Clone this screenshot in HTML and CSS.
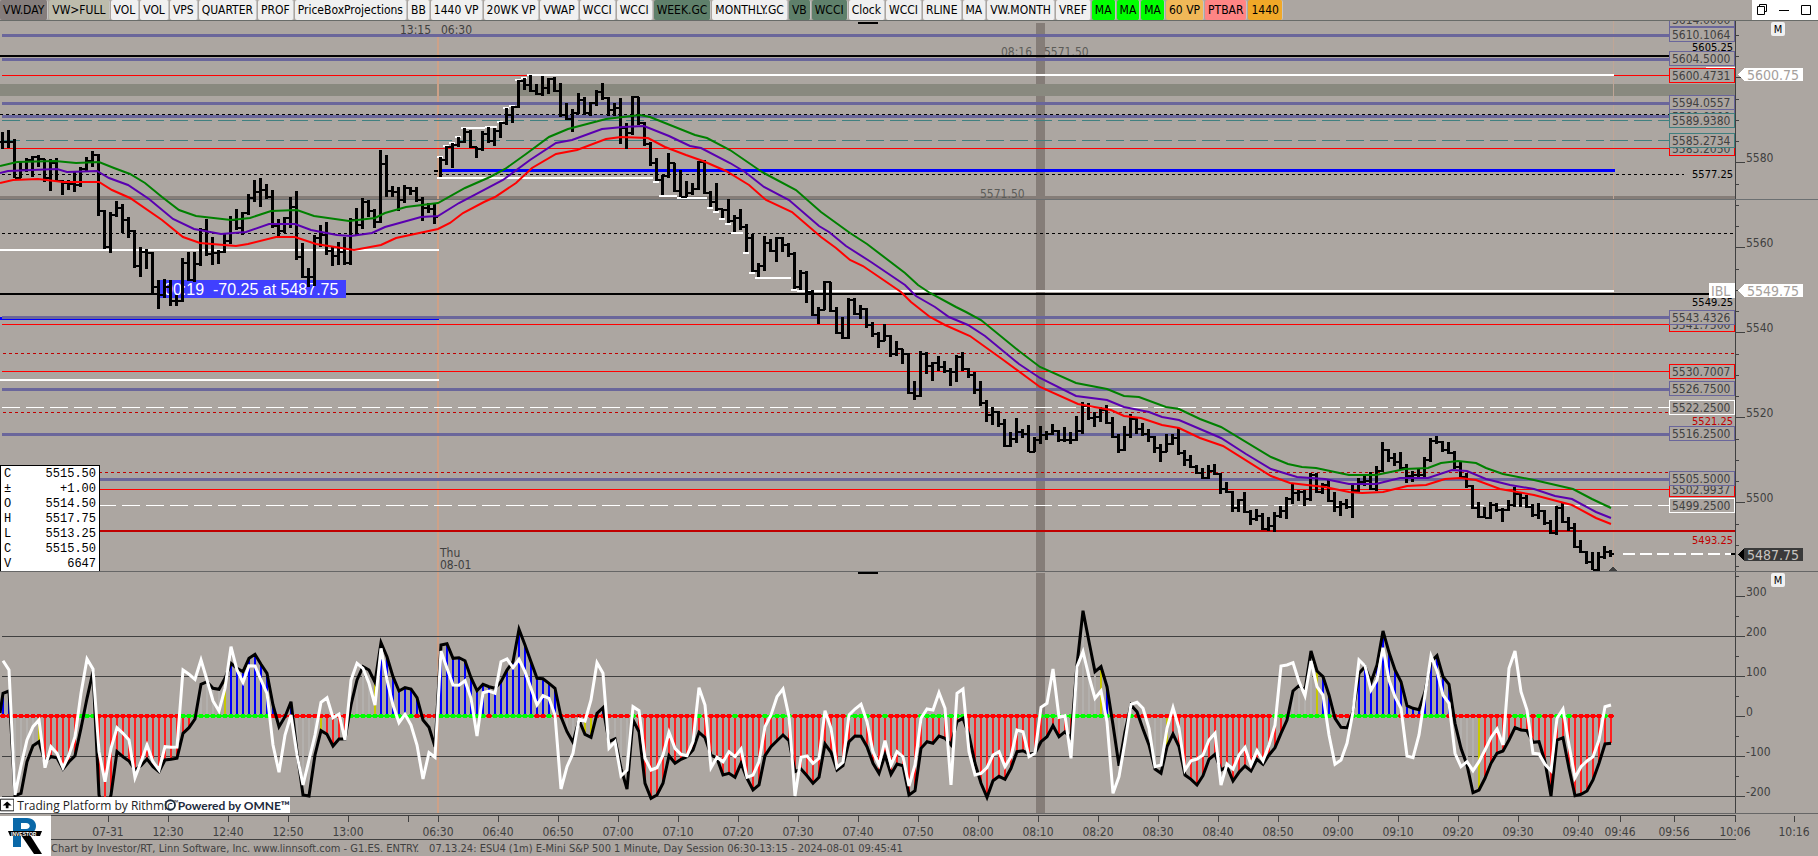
FILE: index.html
```html
<!DOCTYPE html>
<html lang="en">
<head>
    <meta charset="UTF-8">
    <meta name="viewport" content="width=device-width, initial-scale=1.0">
    <title>G1.ES. ENTRY. - ESU4 (1m)</title>
    <link rel="stylesheet" href="styles.css">
</head>
<body>
    <header class="toolbar">
        <nav class="buttons">
            <button class="dark">VW.DAY</button>
            <button class="olive">VW&gt;FULL</button>
            <button>VOL</button>
            <button>VOL</button>
            <button>VPS</button>
            <button>QUARTER</button>
            <button>PROF</button>
            <button>PriceBoxProjections</button>
            <button>BB</button>
            <button>1440 VP</button>
            <button>20WK VP</button>
            <button>VWAP</button>
            <button>WCCI</button>
            <button>WCCI</button>
            <button class="pine">WEEK.GC</button>
            <button>MONTHLY.GC</button>
            <button class="pine">VB</button>
            <button class="pine">WCCI</button>
            <button>Clock</button>
            <button>WCCI</button>
            <button>RLINE</button>
            <button>MA</button>
            <button>VW.MONTH</button>
            <button>VREF</button>
            <button class="lime">MA</button>
            <button class="lime">MA</button>
            <button class="lime">MA</button>
            <button class="sand">60 VP</button>
            <button class="pink">PTBAR</button>
            <button class="orange">1440</button>
        </nav>
        <div class="window-buttons">
            <button aria-label="Restore">
                <svg width="12" height="12" viewBox="0 0 12 12"><path d="M3.5 2.5v-2h7v7h-2M1.5 2.5h7v8h-7z"/></svg>
            </button>
            <button aria-label="Minimize">
                <svg width="12" height="12" viewBox="0 0 12 12"><path d="M1 6.5h10"/></svg>
            </button>
            <button aria-label="Maximize">
                <svg width="12" height="12" viewBox="0 0 12 12"><path d="M1.5 1.5h9v9h-9z"/></svg>
            </button>
        </div>
    </header>

    <main class="workspace">
        <section class="pane">
            <svg class="plot" id="pricePlot"></svg>
            <button class="mode">M</button>
            <table class="quote">
                <tr><th>C</th><td>5515.50</td></tr>
                <tr><th>±</th><td>+1.00</td></tr>
                <tr><th>O</th><td>5514.50</td></tr>
                <tr><th>H</th><td>5517.75</td></tr>
                <tr><th>L</th><td>5513.25</td></tr>
                <tr><th>C</th><td>5515.50</td></tr>
                <tr><th>V</th><td>6647</td></tr>
            </table>
        </section>

        <section class="pane">
            <svg class="plot" id="studyPlot"></svg>
            <button class="mode">M</button>
            <div class="badge">
                <svg class="badge-arrow" width="16" height="14" viewBox="0 0 16 14">
                    <path d="M.5.5h15v13h-15z" fill="#fff" stroke="#000"/>
                    <path d="M8 3l5 4.500h-3.500v3h-3v-3h-3.500z" fill="#000"/>
                </svg>
                <span class="rithmic">Trading Platform by Rithmic<sup>™</sup></span>
                <svg class="badge-ring" width="14" height="14" viewBox="0 0 14 14">
                    <circle cx="7" cy="7" r="5.300" fill="none" stroke="#1d2b3d" stroke-width="2"/>
                </svg>
                <span class="omne">Powered by OMNE™</span>
            </div>
        </section>
    </main>

    <footer class="bottom">
        <svg class="logo" width="51" height="40" viewBox="0 0 51 40">
            <path d="M13 2h14c6 0 9 4 9 8 0 5-4 9-10 9h-5v12h-8zM21 7v6h5c5 0 5-6 0-6z" fill="#0a68a8" fill-rule="evenodd"/>
            <path d="M21 19h9l12 19h-8z" fill="#000"/>
            <path d="M8 15h34l-2 5H10z" fill="#000"/>
            <text x="11" y="20">INVESTOR</text>
        </svg>
        <svg class="plot" id="timeAxis"></svg>
        <p class="credit"><span>Chart by Investor/RT, Linn Software, Inc. www.linnsoft.com - G1.ES. ENTRY.</span><span>07.13.24: ESU4 (1m) E-Mini S&amp;P 500 1 Minute, Day Session 06:30-13:15 - 2024-08-01 09:45:41</span></p>
    </footer>

    <script src="data.js"></script>
    <script src="chart.js"></script>
</body>
</html>
```
FILE: styles.css
```css
* {
    box-sizing: border-box;
}
html, body {
    height: 100%;
}
body {
    margin: 0;
    display: flex;
    flex-direction: column;
    overflow: hidden;
    background: #aca6a1;
    color: #404040;
    font: 12px "DejaVu Sans Condensed", "Noto Sans", sans-serif;
}
button {
    margin: 0;
    padding: 0;
    border: 0;
    font: inherit;
    color: #000;
}

/* toolbar */
.toolbar {
    display: flex;
    justify-content: space-between;
    height: 21px;
    border-bottom: 1px solid #686b68;
}
.buttons {
    display: flex;
    gap: 1px;
}
.buttons button {
    padding: 0 3px;
    background: #f0f0f0;
    border-right: 1px solid #c4c4c4;
    border-radius: 2px;
    white-space: nowrap;
}
.buttons .dark { background: #857d7c; }
.buttons .olive { background: #bdbcac; }
.buttons .pine { background: #5f806b; }
.buttons .lime { background: #00ff00; }
.buttons .sand { background: #f0b858; }
.buttons .pink { background: #ff8585; }
.buttons .orange { background: #f0a828; }
.window-buttons {
    display: flex;
    gap: 10px;
    padding: 0 6px 0 4px;
    background: #fff;
}
.window-buttons button {
    display: flex;
    align-items: center;
    background: none;
}
.window-buttons path {
    fill: none;
    stroke: #000;
}

/* chart panes */
.workspace {
    flex: 1;
    min-height: 0;
    display: grid;
    grid-template-rows: 551fr 242fr;
}
.pane {
    position: relative;
    min-height: 0;
    border-bottom: 1px solid #666;
}
.plot {
    display: block;
    width: 100%;
    height: 100%;
}
.mode {
    position: absolute;
    top: 1px;
    right: 33px;
    width: 14px;
    height: 14px;
    line-height: 13px;
    font-size: 11px;
    background: #f0f0f0;
    border-radius: 2px;
}
.quote {
    position: absolute;
    left: 0;
    bottom: 0;
    width: 100px;
    padding: 0 3px;
    border: 1px solid #000;
    border-bottom: 0;
    border-spacing: 0;
    background: #fff;
    color: #000;
    font: 12px "Liberation Mono", monospace;
}
.quote th, .quote td {
    height: 15px;
    padding: 0;
    font-weight: normal;
    text-align: left;
}
.quote td {
    text-align: right;
}
.badge {
    position: absolute;
    left: 0;
    bottom: 0;
    display: flex;
    align-items: center;
    width: 290px;
    height: 16px;
    background: #fff;
    color: #222;
    white-space: nowrap;
}
.rithmic {
    width: 147px;
    padding-left: 3px;
    font: 12px "Open Sans", sans-serif;
}
.rithmic sup {
    font-size: 7px;
    line-height: 0;
}
.badge-ring {
    margin: 0 1px 0 3px;
}
.omne {
    color: #1d2b3d;
    font: 12px Lato, sans-serif;
    font-weight: bold;
}

/* svg parts */
.plot text {
    fill: #404040;
}
.plot line, .plot path, .plot rect {
    shape-rendering: crispEdges;
}
.plot path, .plot polyline {
    fill: none;
}
.plot .ghost { fill: #5c5c58; }
.plot .small { font-size: 11px; fill: #000; }
.plot .small.loss { fill: #c00000; }
.plot .tag { font-size: 14px; fill: #a5a09c; }
.plot .tag.last { fill: #c8c4c0; }
.plot .banner { font: 16px "Liberation Sans", sans-serif; fill: #fff; white-space: pre; }

/* time axis and credit line */
.bottom {
    display: grid;
    grid-template: 25px 17px / 51px 1fr;
}
.logo {
    grid-row: 1 / 3;
    margin-top: 2px;
    background: #fff;
}
.logo text {
    font: bold 5px "Liberation Sans", sans-serif;
    fill: #fff;
}
.credit {
    display: flex;
    gap: 10px;
    margin: 0 82px 0 0;
    border-top: 1px solid #404040;
    line-height: 18px;
    font-size: 11px;
    white-space: nowrap;
}
```
FILE: data.js
```js
// Samples are stored in thirds of a pixel, counted down from `base`.
// Price bars: high, low, close. A bar opens at the previous close.
const priceBars = [
    { base: 0, bars: [
        [396,448,425],[390,445,425],[417,535,535],[485,535,510],[475,515,480],[468,530,472],[465,500,478],[478,545,535],
        [478,572,490],[475,545,543],[540,584,550],[540,570,552],[515,577,555],[500,560,508],[472,515,482],[453,500,465],
        [462,648,632],[630,748,740],[635,758,645],[603,650,625],[612,698,660],[652,715,692],[690,803,798],[742,830,755],
        [747,807,760],[755,885,860],[840,926,885],[837,893,862],[840,917,903],[885,917,903],[773,905,790],[755,843,840],
        [757,845,793],[685,797,690],[657,768,762],[712,795,760],[750,792,755],[700,760,722],[648,732,660],[627,690,685],
        [635,705,640],[583,645,593],[540,605,575],[534,620,570],[553,597,592],[570,685,678],[658,715,692],[650,700,655],
        [590,683,622],[573,780,772],[728,835,832],[803,860,832],[705,858,715],[675,740,705],[665,765,752],[740,797,768],
        [727,795,757],[712,795,790],[655,795,660],[624,705,675],[594,688,605],[600,650,632],[628,683,665],[450,670,492],
        [465,592,572],[558,590,575],[562,632,600],[555,610,565],[560,585,573],[560,607,600],[592,663,625],[610,640,628],
        [610,673,652],
        // 08-01 session
        [470,532,480],[437,495,440],[430,503,435],[412,440,425],[384,430,395],[390,445,442],[440,475,448],[393,453,403],
        [380,430,423],[385,438,392],[365,415,370],[325,375,345],[318,368,322],[240,325,243],[233,270,255],[225,275,272],
        [253,285,283],[228,288,265],[233,283,238],[232,277,272],[250,350,345],[310,360,358],[328,397,338],[280,342,300],
        [290,345,340],[305,347,310],[270,318,275],[250,300,295],[292,347,330],[310,347,325],[295,432,385],[370,448,398],
        [287,405,292],[290,375,368],[365,437,432],[425,497,490],[475,543,540],[525,585,528],[459,535,490],[490,575,572],
        [510,592,590],[543,592,580],[550,585,568],[483,570,485],[480,583,580],[572,622,605],[550,632,628],[628,655,630],
        [597,670,662],[645,695,655],[627,690,680],[673,755,715],[702,815,812],[790,830,798],[708,812,730],[717,755,752],
        [710,787,713],[710,755,735],[728,772,763],[757,868,862],[810,870,820],[812,908,875],[870,948,945],[922,973,930],
        [843,930,845],[845,937,932]
    ] },
    { base: 900, bars: [
        [22,103,100],[52,118,115],[-5,118,0],[-5,45,42],[15,58,28],[25,85,75],[65,110,103],[97,143,122],
        [73,122,108],[105,172,163],[123,168,148],[147,192,162],[160,283,280],[243,300,288],[153,290,163],[157,223,197],
        [187,242,190],[168,213,200],[183,220,212],[205,257,217],[165,245,172],[157,213,208],[203,235,225],[215,283,270],
        [243,317,308],[300,365,345],[322,375,337],[332,380,373],[358,440,437],[397,440,417],[353,428,395],[388,415,403],
        [375,457,455],[412,457,420],[378,433,405],[393,420,402],[373,405,393],[390,425,420],[382,425,420],[397,432,420],
        [347,422,392],[307,402,318],[310,360,355],[337,380,350],[322,367,330],[315,373,370],[352,415,412],[403,458,450],
        [378,452,405],[342,413,357],[352,402,388],[370,408,402],[387,425,412],[408,460,445],[432,485,455],[402,457,432],
        [403,435,415],[385,465,460],[450,498,480],[465,505,500],[495,523,520],[505,537,533],[495,537,513],[492,525,522],
        [518,583,568],[547,580,575],[572,635,625],[597,637,600],[577,640,637],[630,675,658],[627,662,648],[640,690,688],
        [652,693,677],[637,695,648],[617,655,632],[590,658,598],[548,612,580],[570,602,575],[570,617,597],[520,602,525],
        [520,580,577],[548,583,555],[540,607,602],[575,635,622],[602,647,613],[597,627,622],[550,653,572],[533,577,545],
        [522,557,543],[517,570,567],[497,572,512],[427,515,450],[447,485,475],[460,497,485],[457,510,503],[492,550,527],
        [513,547,525],[507,535,525],[472,530,480],[415,485,422],[408,433,425],[422,455,450],[427,462,458],[452,507,500],
        [487,535,530],[520,563,557],[555,627,623],[605,655,650],[622,655,653],[607,658,615],[610,635,630],[625,665,630],
        [600,632,615],[560,622,582],[580,620,593],[585,625,620],[613,652,645],[608,657,633],[630,675,670],[660,703,700],
        [618,705,625],[610,670,665],[650,692,683],[668,745,742],[720,760,755],[752,792,787],[757,810,810],[757,812,772],
        [738,777,755],[750,770,763]
    ] }
];
const sessionStart = 73;
const sessionOpen = 512;

// moving averages: x,y points in pixels
const averages = [
    ['#008000', '0,166 17,162 55,161 76,163 99,162 114,168 130,174 145,183 162,197 179,210 196,216 231,220 250,218 271,211 297,210 314,216 349,221 375,218 385,213 406,207 438,203 465,188 490,177 505,169 526,154 549,137 568,129 606,119 640,115 650,117 665,123 695,135 707,138 730,150 762,172 796,190 821,212 850,233 867,244 905,273 918,285 930,293 956,307 966,312 981,320 1019,351 1040,367 1076,383 1107,389 1124,396 1139,397 1166,407 1179,409 1200,419 1221,427 1271,457 1288,464 1302,467 1316,468 1349,475 1376,475 1405,469 1428,468 1441,463 1458,461 1476,463 1486,468 1503,474 1534,480 1573,489 1592,499 1611,508'],
    ['#5a00b0', '0,173 8,171 57,169 67,172 97,171 109,178 128,185 149,199 173,219 194,229 221,234 246,232 269,224 295,224 311,230 337,235 351,236 372,233 385,227 421,217 438,216 459,203 503,180 530,160 556,143 572,140 602,129 623,127 644,126 669,136 690,146 701,148 730,163 745,172 764,187 789,200 819,226 829,232 846,246 871,262 905,285 916,296 935,307 949,317 968,325 985,336 1019,364 1040,378 1076,396 1107,400 1124,407 1149,412 1162,417 1179,420 1221,438 1246,454 1271,469 1297,477 1325,479 1349,484 1376,484 1400,478 1428,478 1452,470 1467,471 1486,479 1510,485 1534,489 1555,496 1572,499 1596,512 1611,518'],
    ['#ff0000', '0,183 13,180 38,179 63,182 99,182 112,190 130,198 162,220 183,237 200,243 236,246 248,244 276,237 295,237 316,244 354,250 381,245 396,238 438,229 450,223 463,213 484,202 495,197 516,183 532,168 556,154 577,150 606,139 621,137 648,138 665,147 686,155 703,161 726,171 749,185 766,200 792,212 821,237 836,248 850,260 863,266 901,292 911,302 930,317 945,325 970,336 1002,359 1040,387 1078,404 1111,410 1124,416 1141,418 1162,425 1179,428 1200,438 1223,446 1271,476 1290,483 1307,485 1325,487 1349,492 1362,493 1383,492 1407,486 1426,485 1445,479 1460,478 1476,480 1500,489 1534,495 1572,505 1596,518 1611,524']
];

// horizontal price levels: y, thickness, colour, dash, x start, distance of the end from the axis
const levels = [
    [34, 3, '#6a669b', '', 2, 66], [58, 3, '#6a669b', '', 2, 66], [102, 3, '#6a669b', '', 2, 66],
    [115, 3, '#6a669b', '', 2, 66], [388, 3, '#6a669b', '', 2, 66], [433, 3, '#6a669b', '', 2, 66],
    [478, 3, '#6a669b', '', 2, 66], [55, 2, '#000', '', 0, 66], [293, 2, '#000', '', 0, 26],
    [75, 1, '#f00', '', 2, 66], [148, 1, '#f00', '', 2, 66], [324, 1, '#f00', '', 2, 66],
    [371, 1, '#f00', '', 2, 66], [489, 1, '#f00', '', 2, 66],
    [114, 1, '#000', '3 3', 0, 66], [174, 1, '#000', '3 3', 2, 52], [233, 1, '#000', '3 3', 2, 0],
    [353, 1, '#c00000', '3 3', 3, 0], [412, 1, '#c00000', '3 3', 3, 66], [472, 1, '#c00000', '3 3', 3, 66],
    [120, 1, '#408080', '18 6', 2, 66], [140, 1, '#408080', '18 6', 2, 66],
    [407, 1, '#fff', '18 6', 2, 66], [505, 1, '#fff', '18 6', 2, 66],
    [530, 2, '#c00000', '', 0, 0]
];

// boxed labels at the right edge, drawn in this order
const boxes = [
    [19, '5614.0000', '#6a669b'], [34, '5610.1064', '#6a669b'], [58, '5604.5000', '#6a669b'],
    [75, '5600.4731', '#f00'], [102, '5594.0557', '#6a669b'], [116, '5591.0000', '#6a669b'],
    [120, '5589.9380', '#408080'], [148, '5583.2050', '#f00'], [140, '5585.2734', '#408080'],
    [324, '5541.7500', '#f00'], [317, '5543.4326', '#6a669b'], [371, '5530.7007', '#f00'],
    [388, '5526.7500', '#6a669b'], [407, '5522.2500', '#fff'], [433, '5516.2500', '#6a669b'],
    [489, '5502.9937', '#f00'], [478, '5505.5000', '#6a669b'], [505, '5499.2500', '#fff']
];

const cci = [
    385,378,692,685,590,542,530,590,575,578,612,590,572,490,400,320,690,740,690,560,575,588,615,602,582,605,620,585,583,580,
    505,488,462,358,350,370,373,340,295,310,320,280,268,298,325,420,485,455,410,560,690,693,570,497,508,543,522,522,420,345,
    305,315,352,233,275,335,378,368,372,398,465,487,545,240,236,280,278,287,338,377,358,365,370,350,315,290,193,240,290,340,
    341,355,370,455,500,532,465,508,517,445,428,530,522,610,672,465,500,655,700,690,655,572,595,583,575,555,502,518,570,580,
    630,625,637,595,640,675,660,572,545,527,510,527,620,612,632,655,637,537,562,615,602,530,513,514,545,595,625,570,628,597,
    602,690,677,550,530,535,513,520,540,470,460,510,595,655,697,647,634,643,610,560,557,567,565,530,515,482,515,500,520,300,
    137,230,320,305,365,480,602,500,420,440,492,540,612,625,545,507,545,630,643,660,632,583,568,615,605,648,622,603,618,583,
    598,570,548,505,465,378,362,375,258,318,335,390,460,487,488,440,325,305,352,300,198,262,315,350,422,430,434,380,290,272,
    335,358,475,550,600,683,675,640,595,565,558,525,488,495,497,532,530,590,693,525,518,610,692,688,678,645,595,537,535
];
const turboCci = [
    287,315,690,602,525,485,465,608,545,565,608,570,515,385,282,312,560,650,550,488,505,525,638,590,540,590,615,545,547,546,
    315,328,343,285,345,408,438,370,245,315,352,302,303,345,385,540,622,510,450,570,660,585,510,412,398,458,447,525,345,295,
    310,355,420,250,345,420,473,448,480,540,642,563,577,258,310,360,361,347,400,513,383,378,385,290,282,308,283,320,370,420,
    392,400,450,672,605,565,462,468,405,293,325,550,530,633,615,425,437,580,615,608,570,502,550,568,572,530,368,420,608,577,
    590,560,575,552,637,630,590,485,450,395,372,455,693,577,573,595,580,437,490,607,592,450,432,418,470,560,600,527,600,560,
    575,663,600,460,432,435,383,430,660,385,372,560,630,625,608,570,560,605,575,495,500,575,565,427,415,312,457,452,580,305,
    260,335,400,378,470,685,635,530,418,412,430,490,605,600,490,428,490,615,587,582,570,525,505,660,597,612,570,547,600,557,
    588,540,480,303,300,293,350,392,288,365,390,510,598,585,535,440,285,303,375,345,248,345,395,430,573,578,510,390,273,318,
    390,415,565,605,590,617,590,555,518,492,540,310,258,380,435,565,567,598,617,460,432,540,638,605,588,575,525,425,420
];

// histogram colour runs: colour and last bar of the run
const histogramRuns = [
    ['blue', 1], ['gray', 5], ['yellow', 6], ['red', 12], ['gray', 15], ['red', 31], ['gray', 36], ['yellow', 37],
    ['blue', 45], ['gray', 47], ['blue', 48], ['gray', 52], ['yellow', 53], ['red', 57], ['gray', 61], ['yellow', 62],
    ['blue', 69], ['gray', 72], ['blue', 92], ['gray', 96], ['yellow', 98], ['gray', 99], ['blue', 100], ['gray', 105],
    ['red', 178], ['gray', 182], ['yellow', 183], ['blue', 184], ['gray', 193], ['yellow', 194], ['red', 214],
    ['gray', 218], ['yellow', 219], ['blue', 221], ['gray', 225], ['blue', 241], ['gray', 245], ['yellow', 246], ['red', 268]
];

// bars whose zero line dot is green
const greenDots = [
    [13, 15], [30, 44], [58, 68], [73, 80], [82, 88], [91, 91], [105, 105], [116, 116], [122, 122], [127, 131],
    [137, 137], [141, 144], [147, 147], [153, 160], [173, 184], [188, 188], [212, 221], [225, 232], [237, 240],
    [252, 254], [256, 256], [259, 261], [267, 267]
];

const times = [
    [108, '07-31'], [168, '12:30'], [228, '12:40'], [288, '12:50'], [348, '13:00'], [408, ''], [438, '06:30'],
    [498, '06:40'], [558, '06:50'], [618, '07:00'], [678, '07:10'], [738, '07:20'], [798, '07:30'], [858, '07:40'],
    [918, '07:50'], [978, '08:00'], [1038, '08:10'], [1098, '08:20'], [1158, '08:30'], [1218, '08:40'],
    [1278, '08:50'], [1338, '09:00'], [1398, '09:10'], [1458, '09:20'], [1518, '09:30'], [1578, '09:40'],
    [1620, '09:46'], [1674, '09:56'], [1735, '10:06'], [1794, '10:16']
];
```
FILE: chart.js
```js
const AXIS = 82;
const NS = 'http://www.w3.org/2000/svg';

function add(parent, tag, attrs, text) {
    const el = document.createElementNS(NS, tag);
    for (const key in attrs) el.setAttribute(key, attrs[key]);
    if (text !== undefined) el.textContent = text;
    parent.appendChild(el);
    return el;
}

function rect(parent, x, y, width, height, fill) {
    return add(parent, 'rect', { x, y, width, height, fill });
}

// group whose origin sits on the left edge of the value axis
function axisGroup(parent) {
    const anchor = add(parent, 'svg', { x: '100%', overflow: 'visible' });
    return add(anchor, 'g', { transform: 'translate(' + -AXIS + ',0)' });
}

function barX(i) {
    return 1 + 6 * i;
}

function drawPrice() {
    const svg = document.getElementById('pricePlot');
    const plot = add(svg, 'g', { transform: 'translate(0,-21)' });

    // cursor and session bands
    rect(plot, 1036, 23, 9, 548, '#857d78');
    rect(plot, 0, 84, '100%', 12, '#89897f');
    rect(plot, 0, 196, '100%', 3, '#857d78');
    rect(plot, 437, 35, 2, 540, '#cda188');
    rect(plot, 1613, 21, 1, 550, '#bfa596');
    rect(plot, 858, 22, 20, 2, '#000');
    add(plot, 'text', { x: 400, y: 34 }, '13:15');
    add(plot, 'text', { x: 441, y: 34 }, '06:30');
    add(plot, 'text', { x: 1001, y: 56, class: 'ghost' }, '08:16');
    add(plot, 'text', { x: 1044, y: 56, class: 'ghost' }, '5571.50');
    add(plot, 'text', { x: 980, y: 198, class: 'ghost' }, '5571.50');

    rect(plot, 0, 317, 439, 3, '#00f');
    rect(plot, 0, 249, 439, 2, '#fff');
    rect(plot, 0, 379, 439, 2, '#fff');
    const lines = add(plot, 'g', {});
    const right = axisGroup(plot);
    levels.concat([[316, 3, '#6a669b', '', 2, 66]]).forEach(([y, size, color, dash, start, stop]) => {
        const line = add(lines, 'line', {
            x1: start, x2: '100%', y1: y + size / 2, y2: y + size / 2,
            stroke: color, 'stroke-width': size
        });
        if (dash) line.setAttribute('stroke-dasharray', dash);
        if (stop) rect(right, -stop, y, stop, size, '#aca6a1');
    });
    rect(right, 0, 21, AXIS, 550, '#aca6a1');
    rect(right, 1, 199, AXIS, 1, '#555a5e');
    rect(plot, 0, 199, '100%', 1, '#6c7072');
    rect(plot, 439, 169, 1176, 3, '#00f');

    // flatten the chunks to pixels
    const bars = [];
    priceBars.forEach(chunk => chunk.bars.forEach(bar => {
        bars.push(bar.map(v => Math.round((v + chunk.base) / 3)));
    }));

    // initial balance: running high and low of the first hour
    let high = 999, low = 0;
    for (let i = sessionStart; i <= 133; i++) {
        high = Math.min(high, bars[i][0]);
        low = Math.max(low, bars[i][1]);
        const width = i === 133 ? 1616 - barX(i) : 6;
        rect(plot, barX(i) - 2, high - 1, width, 2, '#fff');
        rect(plot, barX(i) - 2, low, width, 2, '#fff');
    }

    rect(plot, 159, 280, 187, 18, '#4040ff');
    add(plot, 'text', { x: 164, y: 295, class: 'banner' }, '00:19  -70.25 at 5487.75');

    let d = '', open = bars[0][2];
    bars.forEach(([top, bottom, close], i) => {
        const x = barX(i);
        if (i === sessionStart) open = Math.round(sessionOpen / 3);
        d += 'M' + x + ' ' + top + 'h3v' + (bottom - top) + 'h-3z';
        d += 'M' + (x - (i === sessionStart ? 5 : 2)) + ' ' + (open - 1) + 'h4v2h-4z';
        d += 'M' + (x + 2) + ' ' + (close - 1) + 'h3v2h-3z';
        open = close;
    });
    add(plot, 'path', { d, style: 'fill:#000' });

    averages.forEach(([color, points]) => {
        add(plot, 'polyline', { points, stroke: color, 'stroke-width': 2 });
    });

    // axis line, ticks and labels
    rect(right, -1, 21, 1, 550, '#404040');
    for (let price = 5485, y = 566; price <= 5610; price += 5, y = Math.round(162.3 + (5580 - price) * 4.25)) {
        const major = price % 20 === 0;
        rect(right, 0, Math.round(162.3 + (5580 - price) * 4.25), major ? 9 : 3, 1, '#404040');
        if (major && price < 5600) {
            add(right, 'text', { x: 10, y: Math.round(162.3 + (5580 - price) * 4.25) }, price);
        }
    }
    rect(right, -30, 67, 29, 2, '#fff');
    boxes.forEach(([y, label, color]) => {
        add(right, 'rect', { x: -66.500, y: y - 6.500, width: 65, height: 14, fill: '#aca6a1', stroke: color });
        add(right, 'text', { x: -64, y: y + 5 }, label);
    });
    [[51, '5605.25', ''], [178, '5577.25', ''], [306, '5549.25', ''], [425, '5521.25', ' loss'], [544, '5493.25', ' loss']]
        .forEach(([y, label, tone]) => {
            add(right, 'text', { x: -3, y, class: 'small' + tone, 'text-anchor': 'end' }, label);
        });

    [[74, '5600.75', '#fff', '#fff'], [290, '5549.75', '#fff', '#fff'], [554, '5487.75', '#3a3a3a', '#000']]
        .forEach(([y, label, back, arrow]) => {
            rect(right, 8, y - 6, 59, 13, back);
            add(right, 'path', { d: 'M2 ' + y + 'l6-6v13z', style: 'fill:' + arrow });
            add(right, 'text', { x: 11, y: y + 6, class: 'tag' + (back === '#fff' ? '' : ' last') }, label);
        });
    rect(right, -27, 283, 26, 15, '#fff');
    add(right, 'text', { x: -25, y: 296, class: 'tag' }, 'IBL');

    // last price
    add(plot, 'path', { d: 'M1623 554h108', stroke: '#fff', 'stroke-width': 2, 'stroke-dasharray': '12 5' });
    rect(right, -5, 553, 4, 2, '#000');
    add(plot, 'path', { d: 'M1613 566l4 5h-8z', style: 'fill:#404040' });
    add(plot, 'text', { x: 440, y: 557 }, 'Thu');
    add(plot, 'text', { x: 440, y: 569 }, '08-01');
}

function drawStudy() {
    const svg = document.getElementById('studyPlot');
    const plot = add(svg, 'g', { transform: 'translate(0,-572)' });
    const toY = v => 565 + v / 3;

    rect(plot, 1036, 573, 9, 241, '#857d78');
    rect(plot, 858, 572, 20, 2, '#000');
    rect(plot, 437, 572, 2, 242, '#cda188');
    [636, 676, 756, 796].forEach(y => rect(plot, 2, y, '100%', 1, '#404040'));
    const right = axisGroup(plot);
    rect(right, 0, 572, AXIS, 242, '#aca6a1');
    rect(right, -1, 572, 1, 242, '#404040');

    const colors = { blue: '#0000ff', gray: '#b3b0ad', yellow: '#c8c800', red: '#ff2020' };
    let run = 0;
    cci.forEach((v, i) => {
        if (i > histogramRuns[run][1]) run++;
        const y = Math.round(toY(v));
        const color = colors[histogramRuns[run][0]];
        if (y < 714) rect(plot, barX(i) + 1, y, 2, 714 - y, color);
        if (y > 718) rect(plot, barX(i) + 1, 718, 2, y - 718, color);
    });

    const points = list => list.map((v, i) => (3 + 6 * i) + ',' + toY(v).toFixed(1)).join(' ');
    const dots = (list, from) => list.forEach((v, i) => {
        const green = greenDots.some(r => i >= r[0] && i <= r[1]);
        rect(plot, barX(i) - 1, 715, 6, 2, green ? '#0f0' : '#f00');
        rect(plot, barX(i), 714, 4, 4, green ? '#0f0' : '#f00');
    });
    dots(cci);
    add(plot, 'polyline', { points: '0,713 ' + points(cci), stroke: '#000', 'stroke-width': 3 });
    add(plot, 'polyline', { points: points(turboCci), stroke: '#fff', 'stroke-width': 3 });

    for (let value = 350; value >= -200; value -= 50) {
        const y = Math.round(716.3 - value * .4);
        const major = value % 100 === 0;
        rect(right, 0, y, major ? 9 : 3, 1, '#404040');
        if (major) add(right, 'text', { x: 10, y }, value);
    }
}

function drawTimes() {
    const svg = document.getElementById('timeAxis');
    const plot = add(svg, 'g', { transform: 'translate(-51,-814)' });
    rect(plot, 51, 815, 1685, 1, '#404040');
    times.forEach(([x, label]) => {
        rect(plot, x, 816, 1, 6, '#404040');
        add(plot, 'text', { x, y: 836, 'text-anchor': 'middle' }, label);
    });
}

drawPrice();
drawStudy();
drawTimes();
```
